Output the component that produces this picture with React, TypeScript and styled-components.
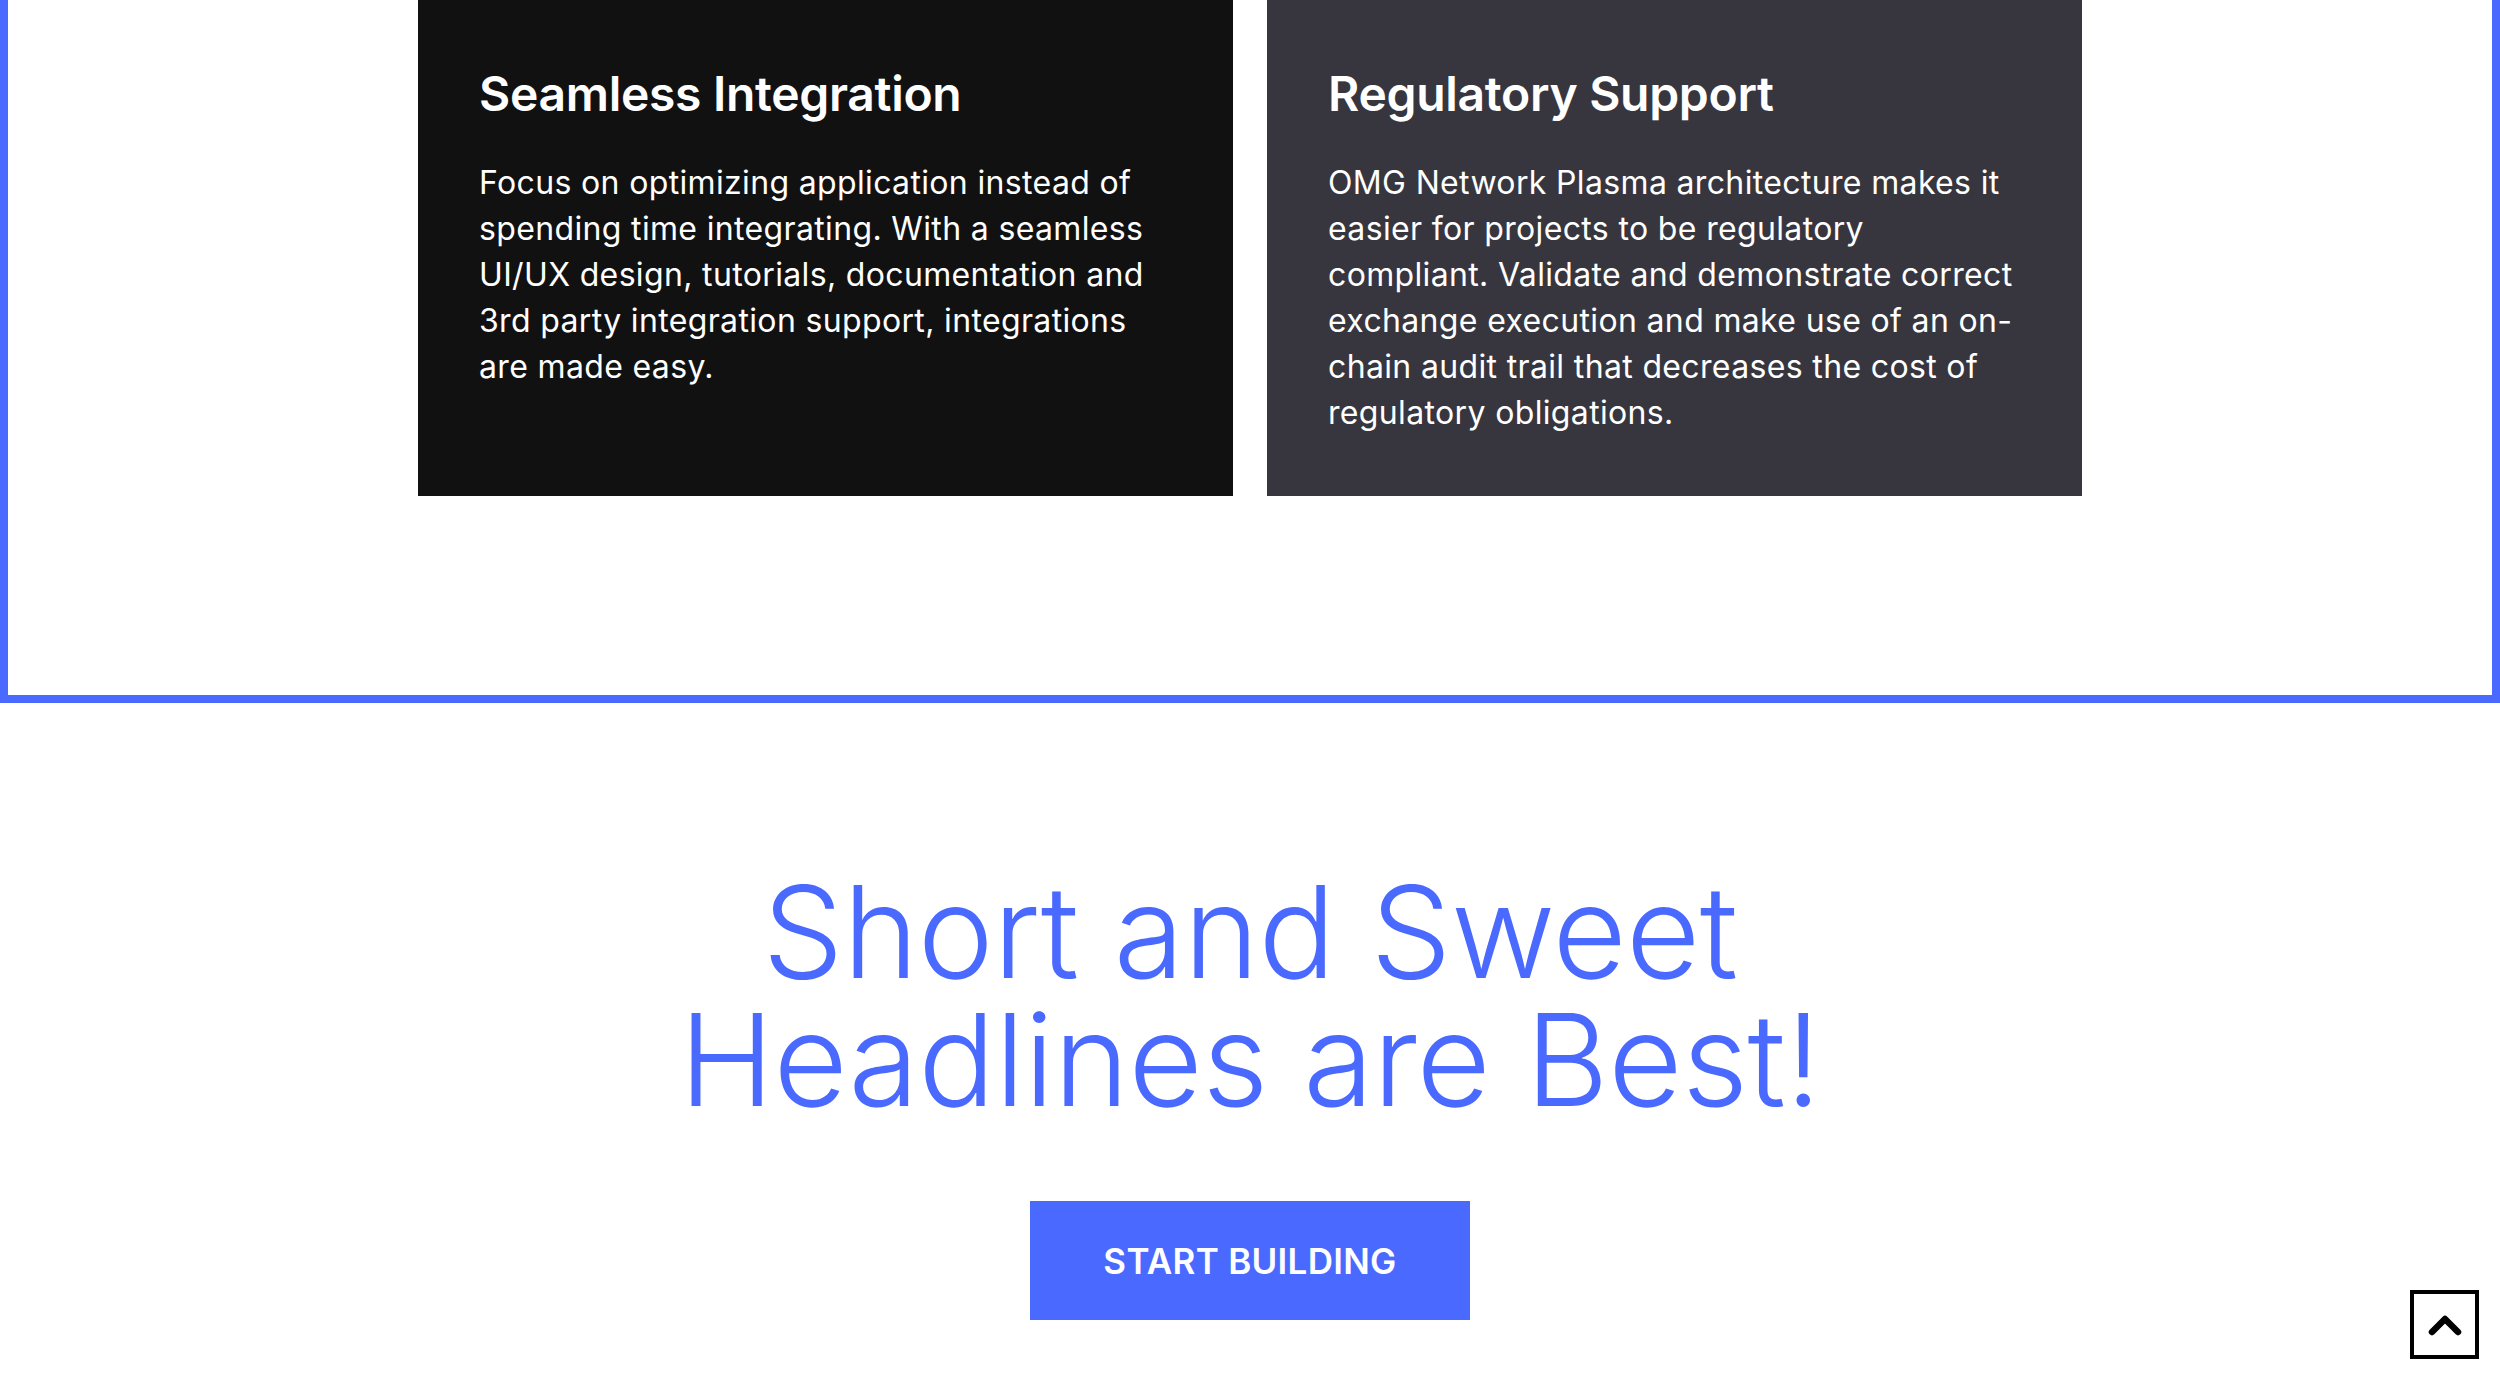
import React from "react";
import styled, { createGlobalStyle } from "styled-components";

const BLUE = "#4a69ff";

const GlobalStyle = createGlobalStyle`
  html, body {
    margin: 0;
    padding: 0;
    background: #ffffff;
    font-family: Inter, "Liberation Sans", Arial, sans-serif;
  }
  * { box-sizing: border-box; }
`;

const Page = styled.main`
  display: flex;
  flex-direction: column;
  align-items: stretch;
  padding-bottom: 200px;
`;

const FramedSection = styled.section`
  border: 8px solid ${BLUE};
  border-top: none;
  padding: 0 0 199px;
  display: flex;
  justify-content: center;
`;

const CardGrid = styled.div`
  display: grid;
  grid-template-columns: 815px 815px;
  column-gap: 34px;
  margin-left: -8px;
  margin-right: -8px;
`;

const Card = styled.article<{ $tone: "dark" | "slate" }>`
  background: ${(p) => (p.$tone === "dark" ? "#111111" : "#37363f")};
  color: #ffffff;
  padding: 65px 60px 60px 61px;
  display: flex;
  flex-direction: column;
`;

const CardTitle = styled.h3`
  margin: 0;
  font-size: 48px;
  line-height: 58px;
  font-weight: 600;
  letter-spacing: -0.3px;
`;

const CardText = styled.p`
  margin: 37px 0 0;
  font-size: 32px;
  line-height: 46px;
  font-weight: 400;
  letter-spacing: 0.35px;
`;

const CtaSection = styled.section`
  display: flex;
  flex-direction: column;
  align-items: center;
  padding-top: 165px;
`;

const Headline = styled.h2`
  margin: 0;
  color: ${BLUE};
  font-size: 128px;
  line-height: 128px;
  font-weight: 300;
  text-align: center;
  letter-spacing: -0.5px;
`;

const HeadlineLine = styled.span`
  display: block;
`;

const StartButton = styled.button`
  margin-top: 77px;
  width: 440px;
  height: 119px;
  border: none;
  background: ${BLUE};
  color: #ffffff;
  font-family: Inter, "Liberation Sans", Arial, sans-serif;
  font-size: 35px;
  font-weight: 600;
  letter-spacing: 0.3px;
  cursor: pointer;
`;

const ScrollTop = styled.button`
  position: fixed;
  right: 21px;
  bottom: 21px;
  width: 69px;
  height: 69px;
  background: #ffffff;
  border: 4px solid #000000;
  padding: 0;
  display: flex;
  align-items: center;
  justify-content: center;
  cursor: pointer;
`;

const cards = [
  {
    tone: "dark" as const,
    title: "Seamless Integration",
    text: "Focus on optimizing application instead of spending time integrating. With a seamless UI/UX design, tutorials, documentation and 3rd party integration support, integrations are made easy.",
  },
  {
    tone: "slate" as const,
    title: "Regulatory Support",
    text: "OMG Network Plasma architecture makes it easier for projects to be regulatory compliant. Validate and demonstrate correct exchange execution and make use of an on-chain audit trail that decreases the cost of regulatory obligations.",
  },
];

export default function App() {
  return (
    <>
      <GlobalStyle />
      <Page>
        <FramedSection>
          <CardGrid>
            {cards.map((c) => (
              <Card key={c.title} $tone={c.tone}>
                <CardTitle>{c.title}</CardTitle>
                <CardText>{c.text}</CardText>
              </Card>
            ))}
          </CardGrid>
        </FramedSection>
        <CtaSection>
          <Headline>
            <HeadlineLine>Short and Sweet</HeadlineLine>
            <HeadlineLine>Headlines are Best!</HeadlineLine>
          </Headline>
          <StartButton>START BUILDING</StartButton>
        </CtaSection>
      </Page>
      <ScrollTop aria-label="Scroll to top">
        <svg width="34" height="22" viewBox="0 0 34 22" fill="none">
          <path
            d="M4 18 L17 5 L30 18"
            stroke="#000"
            strokeWidth="6.5"
            strokeLinecap="round"
            strokeLinejoin="round"
          />
        </svg>
      </ScrollTop>
    </>
  );
}
